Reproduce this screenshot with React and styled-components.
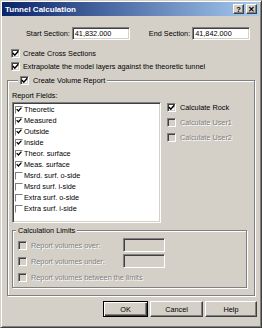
import styled, { createGlobalStyle } from "styled-components";

const GlobalStyle = createGlobalStyle`
  html, body {
    margin: 0;
    padding: 0;
    background: #ffffff;
  }
  body {
    font-family: "Liberation Sans", Arial, sans-serif;
    font-size: 7.3px;
    line-height: 9px;
    color: #000;
  }
  * {
    box-sizing: border-box;
  }
`;

const Window = styled.div`
  width: 262px;
  height: 328px;
  background: #d4d0c8;
  border: 1px solid;
  border-color: #d4d0c8 #404040 #404040 #d4d0c8;
  box-shadow: inset 1px 1px #fff, inset -1px -1px #808080;
  padding: 1px 2px 2px 1px;
  display: flex;
  flex-direction: column;
`;

const TitleBar = styled.div`
  height: 14px;
  background: linear-gradient(to right, #0a246a, #a6caf0);
  display: flex;
  align-items: center;
  padding: 0 2px 0 3px;
`;

const Title = styled.span`
  flex: 1;
  color: #fff;
  font-weight: bold;
  font-size: 8px;
`;

const TitleButton = styled.span`
  width: 11px;
  height: 10px;
  margin-left: ${({ $gap }) => $gap || 0}px;
  background: #d4d0c8;
  border: 1px solid;
  border-color: #fff #404040 #404040 #fff;
  box-shadow: inset -1px -1px #808080;
  display: flex;
  align-items: center;
  justify-content: center;
  font-weight: bold;
  font-size: 7.5px;
  line-height: 7px;
`;

const Body = styled.div`
  flex: 1;
  display: flex;
  flex-direction: column;
`;

const SectionRow = styled.div`
  display: flex;
  align-items: center;
  height: 13px;
  margin-top: 11px;
  padding-left: 24px;
`;

const SectionLabel = styled.span`
  margin-left: ${({ $offset }) => $offset || 0}px;
  margin-right: 2px;
  white-space: nowrap;
`;

const TextBox = styled.div`
  width: ${({ $width }) => $width}px;
  height: ${({ $height }) => $height || 13}px;
  background: ${({ $disabled }) => ($disabled ? "#d4d0c8" : "#fff")};
  border: 1px solid;
  border-color: #808080 #fff #fff #808080;
  box-shadow: inset 1px 1px #404040, inset -1px -1px #d4d0c8;
  padding: 1px 0 0 2px;
  white-space: nowrap;
`;

const CheckRow = styled.label`
  display: flex;
  align-items: center;
  height: 13px;
  margin-top: ${({ $top }) => $top || 0}px;
  padding-left: 9px;
  gap: 3px;
  white-space: nowrap;
`;

const Box = styled.span`
  flex: none;
  width: ${({ $size }) => $size}px;
  height: ${({ $size }) => $size}px;
  background: ${({ $disabled }) => ($disabled ? "#d4d0c8" : "#fff")};
  border: 1px solid;
  border-color: #808080 #fff #fff #808080;
  box-shadow: ${({ $flat }) =>
    $flat ? "none" : "inset 1px 1px #404040, inset -1px -1px #d4d0c8"};
  display: flex;
  align-items: center;
  justify-content: center;
`;

const Text = styled.span`
  color: ${({ $disabled }) => ($disabled ? "#808080" : "#000")};
  text-shadow: ${({ $disabled }) => ($disabled ? "1px 1px 0 #fff" : "none")};
  white-space: nowrap;
`;

const Check = ({ checked, disabled, size = 9, flat }) => (
  <Box $size={size} $disabled={disabled} $flat={flat}>
    {checked && (
      <svg width="7" height="7" viewBox="0 0 7 7">
        <path d="M0.8 3 L2.8 5.2 L6.3 1.3" stroke="#000" strokeWidth="1.5" fill="none" />
      </svg>
    )}
  </Box>
);

const GroupBox = styled.div`
  position: relative;
  margin: ${({ $margin }) => $margin};
  width: ${({ $width }) => $width}px;
  height: ${({ $height }) => $height}px;
  border: 1px solid #808080;
  box-shadow: inset 1px 1px #fff, 1px 1px #fff;
  padding: ${({ $padding }) => $padding};
`;

const Legend = styled.div`
  position: absolute;
  top: -5px;
  left: ${({ $left }) => $left}px;
  height: 9px;
  background: #d4d0c8;
  padding: 0 2px;
  display: flex;
  align-items: center;
  gap: 4px;
  white-space: nowrap;
`;

const FieldsLabel = styled.div`
  height: 9px;
  margin-bottom: 2px;
`;

const FieldsRow = styled.div`
  display: flex;
  align-items: flex-start;
`;

const ListBox = styled.div`
  width: 149px;
  height: 121px;
  background: #fff;
  border: 1px solid;
  border-color: #808080 #fff #fff #808080;
  box-shadow: inset 1px 1px #404040, inset -1px -1px #d4d0c8;
  padding: 1px 2px;
`;

const ListItem = styled.div`
  display: flex;
  align-items: center;
  height: 11px;
  gap: 1px;
  white-space: nowrap;
`;

const SideOptions = styled.div`
  display: flex;
  flex-direction: column;
  gap: 6px;
  margin-left: 6px;
  padding-top: 1px;
`;

const SideOption = styled.div`
  display: flex;
  align-items: center;
  height: 9px;
  gap: 4px;
`;

const LimitRow = styled.div`
  display: grid;
  grid-template-columns: 105px 42px;
  align-items: center;
  height: 16px;
`;

const LimitLabel = styled.div`
  display: flex;
  align-items: center;
  gap: 4px;
`;

const ButtonRow = styled.div`
  display: flex;
  justify-content: flex-end;
  gap: 2px;
  margin-top: 5px;
  padding-right: 2px;
`;

const Button = styled.div`
  width: ${({ $width }) => $width}px;
  height: 16px;
  display: flex;
  align-items: center;
  justify-content: center;
  border: 1px solid;
  border-color: ${({ $default }) =>
    $default ? "#000" : "#fff #404040 #404040 #fff"};
  box-shadow: ${({ $default }) =>
    $default
      ? "inset 1px 1px #fff, inset -1px -1px #404040, inset -2px -2px #808080"
      : "inset -1px -1px #808080"};
`;

const fields = [
  ["Theoretic", true],
  ["Measured", true],
  ["Outside", true],
  ["Inside", true],
  ["Theor. surface", true],
  ["Meas. surface", true],
  ["Msrd. surf. o-side", false],
  ["Msrd surf. i-side", false],
  ["Extra surf. o-side", false],
  ["Extra surf. i-side", false],
];

const sideOptions = [
  ["Calculate Rock", true, false],
  ["Calculate User1", false, true],
  ["Calculate User2", false, true],
];

const limits = [
  ["Report volumes over:", true],
  ["Report volumes under:", true],
  ["Report volumes between the limits", false],
];

export default function App() {
  return (
    <>
      <GlobalStyle />
      <Window>
        <TitleBar>
          <Title>Tunnel Calculation</Title>
          <TitleButton>?</TitleButton>
          <TitleButton $gap={2}>✕</TitleButton>
        </TitleBar>
        <Body>
          <SectionRow>
            <SectionLabel>Start Section:</SectionLabel>
            <TextBox $width={58}>41,832.000</TextBox>
            <SectionLabel $offset={19}>End Section:</SectionLabel>
            <TextBox $width={58}>41,842.000</TextBox>
          </SectionRow>

          <CheckRow $top={7}>
            <Check checked />
            <Text>Create Cross Sections</Text>
          </CheckRow>
          <CheckRow>
            <Check checked />
            <Text>Extrapolate the model layers against the theoretic tunnel</Text>
          </CheckRow>

          <GroupBox $margin="7px 0 0 5px" $width={248} $height={216} $padding="10px 0 0 4px">
            <Legend $left={10}>
              <Check checked />
              <Text>Create Volume Report</Text>
            </Legend>
            <FieldsLabel>Report Fields:</FieldsLabel>
            <FieldsRow>
              <ListBox>
                {fields.map(([name, checked]) => (
                  <ListItem key={name}>
                    <Check checked={checked} size={8} flat />
                    <Text>{name}</Text>
                  </ListItem>
                ))}
              </ListBox>
              <SideOptions>
                {sideOptions.map(([name, checked, disabled]) => (
                  <SideOption key={name}>
                    <Check checked={checked} disabled={disabled} />
                    <Text $disabled={disabled}>{name}</Text>
                  </SideOption>
                ))}
              </SideOptions>
            </FieldsRow>

            <GroupBox $margin="7px 0 0 0" $width={235} $height={58} $padding="6px 0 0 5px">
              <Legend $left={3}>
                <Text>Calculation Limits</Text>
              </Legend>
              {limits.map(([name, hasInput]) => (
                <LimitRow key={name}>
                  <LimitLabel>
                    <Check disabled />
                    <Text $disabled>{name}</Text>
                  </LimitLabel>
                  {hasInput && <TextBox $width={42} $height={14} $disabled />}
                </LimitRow>
              ))}
            </GroupBox>
          </GroupBox>

          <ButtonRow>
            <Button $width={45} $default>OK</Button>
            <Button $width={53}>Cancel</Button>
            <Button $width={52}>Help</Button>
          </ButtonRow>
        </Body>
      </Window>
    </>
  );
}
